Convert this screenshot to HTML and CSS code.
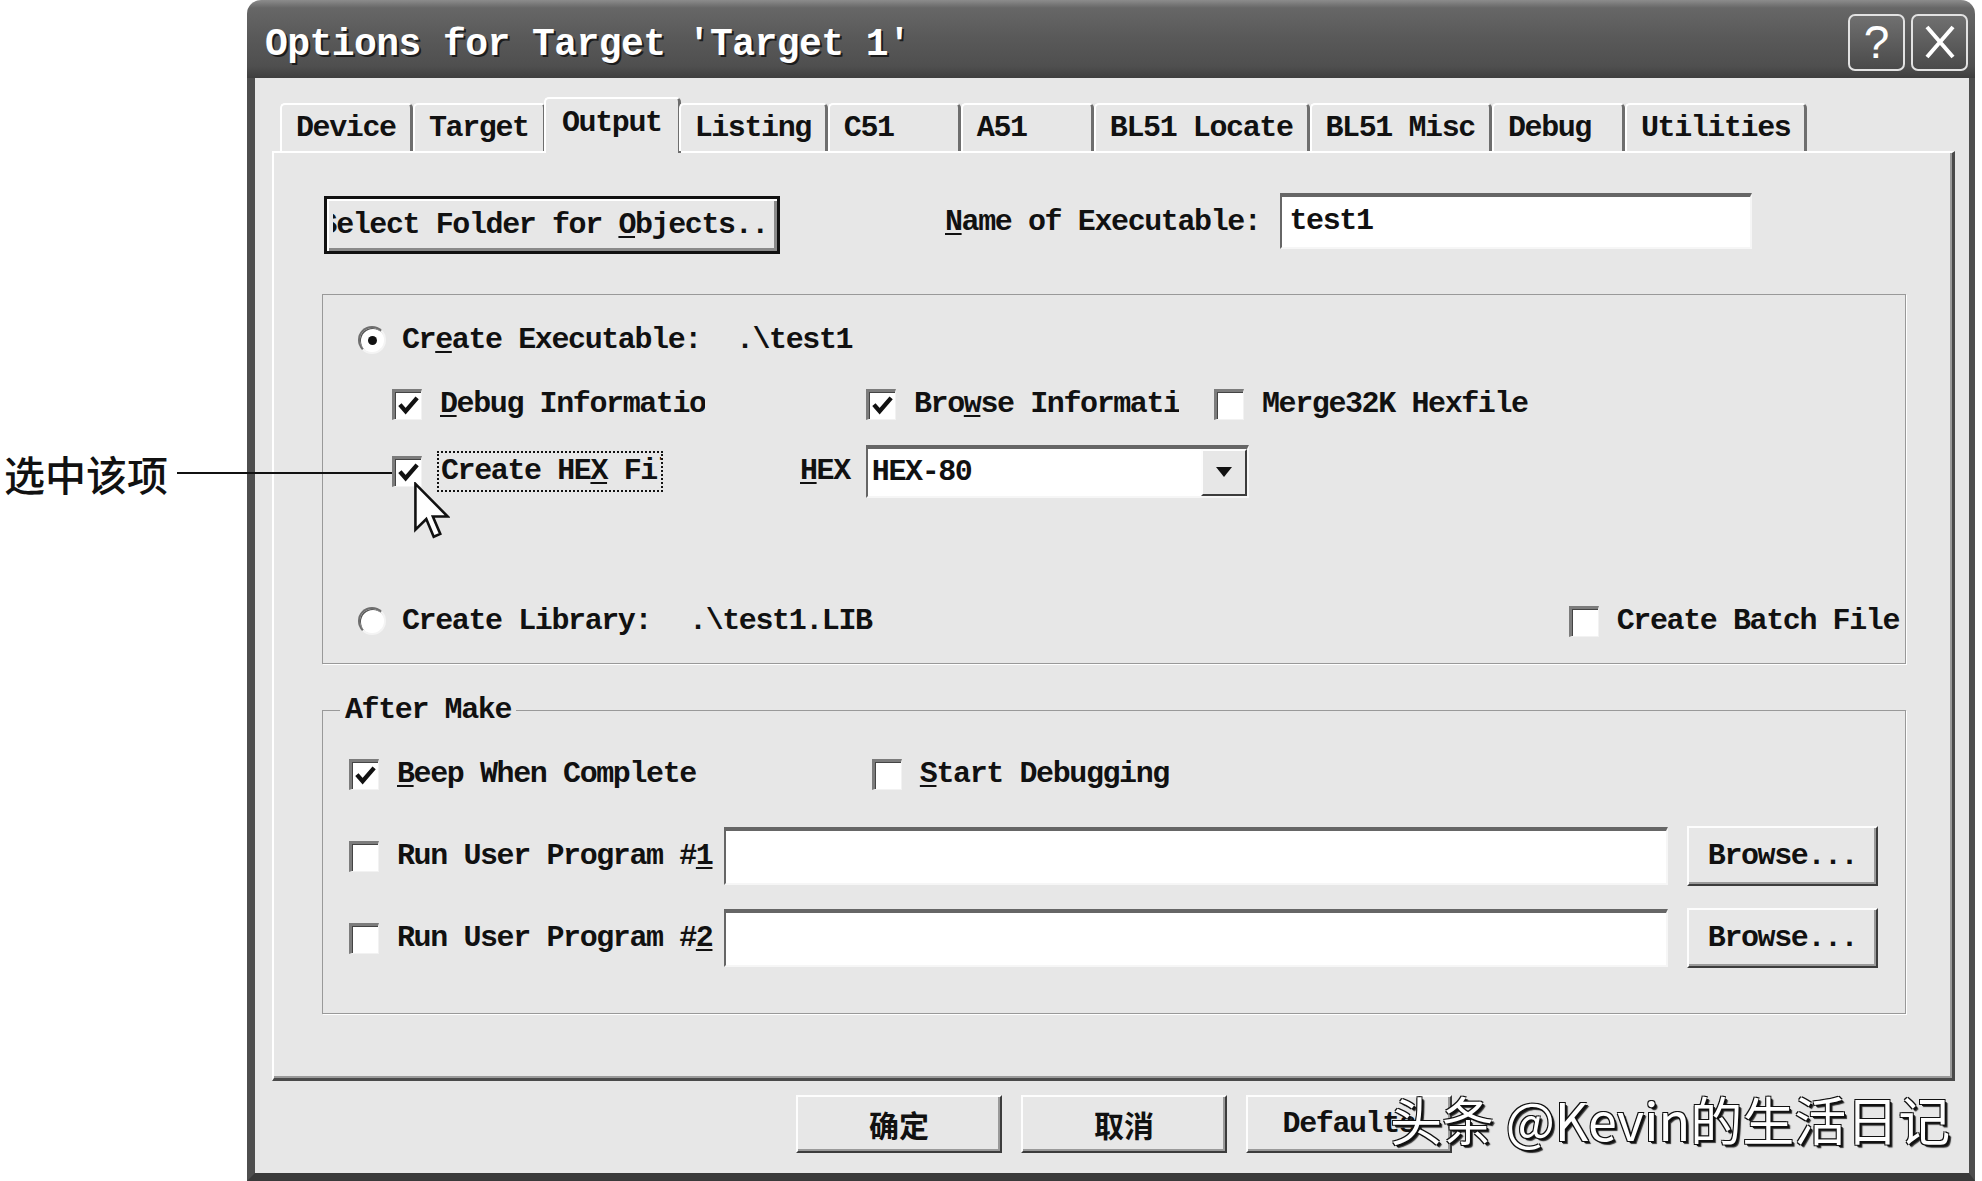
FILE: index.html
```html
<!DOCTYPE html>
<html lang="zh-CN">
<head>
    <meta charset="UTF-8">
    <meta name="viewport" content="width=device-width, initial-scale=1.0">
    <title>Options for Target 'Target 1'</title>
    <link rel="stylesheet" href="styles.css">
</head>
<body>
    <div id="page">
        <div id="window">
            <div class="titlebar">
                <span class="titleText">Options for Target 'Target 1'</span>
                <div class="capButtons">
                    <div class="capBtn">?</div>
                    <div class="capBtn">
                        <svg viewBox="0 0 36 40" width="36" height="40"><path d="M5 5 L31 35 M31 5 L5 35" stroke="#fff" stroke-width="4" fill="none"/></svg>
                    </div>
                </div>
            </div>
            <div class="client">
                <div class="tabs">
                    <div class="tab">Device</div>
                    <div class="tab">Target</div>
                    <div class="tab active">Output</div>
                    <div class="tab">Listing</div>
                    <div class="tab">C51</div>
                    <div class="tab">A51</div>
                    <div class="tab">BL51 Locate</div>
                    <div class="tab">BL51 Misc</div>
                    <div class="tab">Debug</div>
                    <div class="tab">Utilities</div>
                </div>
                <div class="panel">
                    <div class="outputRow">
                        <div class="btn btnDefault btnFolder">
                            <div class="folderText"><span>Select Folder for <u>O</u>bjects...</span></div>
                        </div>
                        <span class="nameLabel"><u>N</u>ame of Executable:</span>
                        <div class="textBox nameBox">test1</div>
                    </div>

                    <div class="group groupExe">
                        <div class="optRow">
                            <span class="radio on"></span>
                            <span>Cr<u>e</u>ate Executable:</span>
                            <span class="pathExe">.\test1</span>
                        </div>
                        <div class="optRow rowFlags">
                            <span class="check"><svg viewBox="0 0 24 24"><path d="M3 11 L9 18 L21 4" stroke="#111" stroke-width="4.5" fill="none"/></svg></span>
                            <span class="clip"><u>D</u>ebug Information</span>
                            <span class="check gapBrowse"><svg viewBox="0 0 24 24"><path d="M3 11 L9 18 L21 4" stroke="#111" stroke-width="4.5" fill="none"/></svg></span>
                            <span class="clip">Bro<u>w</u>se Information</span>
                            <span class="check gapMerge"></span>
                            <span>Merge32K Hexfile</span>
                        </div>
                        <div class="optRow rowHex">
                            <span class="check checkFocus"><svg viewBox="0 0 24 24"><path d="M3 11 L9 18 L21 4" stroke="#111" stroke-width="4.5" fill="none"/></svg></span>
                            <span class="focus"><span>Create HE<u>X</u> File</span></span>
                            <span class="hexLabel"><u>H</u>EX</span>
                            <div class="combo">
                                <span>HEX-80</span>
                                <span class="comboBtn"><svg viewBox="0 0 16 10" width="16" height="10"><path d="M0 0 H16 L8 10 Z" fill="#111"/></svg></span>
                            </div>
                        </div>
                        <div class="optRow rowLib">
                            <span class="radio"></span>
                            <span>Create Library:</span>
                            <span class="pathLib">.\test1.LIB</span>
                            <span class="check gapBatch"></span>
                            <span>Create Batch File</span>
                        </div>
                    </div>

                    <fieldset class="group groupMake">
                        <legend>After Make</legend>
                        <div class="optRow rowBeep">
                            <span class="check"><svg viewBox="0 0 24 24"><path d="M3 11 L9 18 L21 4" stroke="#111" stroke-width="4.5" fill="none"/></svg></span>
                            <span><u>B</u>eep When Complete</span>
                            <span class="check gapDebug"></span>
                            <span><u>S</u>tart Debugging</span>
                        </div>
                        <div class="optRow rowRun">
                            <span class="check"></span>
                            <span class="runLabel">Run User Program #<u>1</u></span>
                            <div class="textBox runBox"></div>
                            <div class="btn btnBrowse">Browse...</div>
                        </div>
                        <div class="optRow rowRun rowRun2">
                            <span class="check"></span>
                            <span class="runLabel">Run User Program #<u>2</u></span>
                            <div class="textBox runBox"></div>
                            <div class="btn btnBrowse">Browse...</div>
                        </div>
                    </fieldset>
                </div>
                <div class="dlgButtons">
                    <div class="btn btnDlg cjk">确定</div>
                    <div class="btn btnDlg cjk">取消</div>
                    <div class="btn btnDlg">Defaults</div>
                </div>
            </div>
        </div>

        <div class="note">
            <span class="noteText">选中该项</span>
            <span class="noteLine"></span>
        </div>
        <svg class="cursor" viewBox="0 0 12.6 19.6" width="36" height="57">
            <path d="M0.5 0.5 V16.5 L4.3 12.8 L6.9 19 L9.2 18 L6.6 11.9 H11.8 Z" fill="#fff" stroke="#111" stroke-width="0.9" stroke-linejoin="miter"/>
        </svg>
        <div class="watermark">头条 @Kevin的生活日记</div>
    </div>
</body>
</html>
```

FILE: styles.css
```css
body {
    margin: 0;
    background: #fff;
}
#page {
    position: relative;
    width: 1982px;
    height: 1181px;
    overflow: hidden;
    box-sizing: border-box;
    padding-left: 247px;
    font-family: "Liberation Mono", monospace;
    font-weight: bold;
    font-size: 30px;
    letter-spacing: -1.4px;
    color: #111;
}
#window {
    width: 1728px;
    height: 1181px;
    display: flex;
    flex-direction: column;
}

/* title bar */
.titlebar {
    height: 78px;
    flex-shrink: 0;
    box-sizing: border-box;
    display: flex;
    align-items: center;
    padding: 10px 7px 0 18px;
    border-radius: 14px 14px 0 0;
    background: linear-gradient(#8c8c8c 0, #676767 10%, #5a5a5a 45%, #4f4f4f 85%, #3e3e3e 100%);
}
.titleText {
    font-size: 38px;
    letter-spacing: -0.55px;
    color: #fff;
    text-shadow: 2px 2px 0 #1c1c1c;
}
.capButtons {
    margin: -4px 0 0 auto;
    display: flex;
    gap: 6px;
}
.capBtn {
    width: 57px;
    height: 57px;
    box-sizing: border-box;
    border: 2px solid #e2e2e2;
    border-radius: 7px;
    background: linear-gradient(#707070, #4a4a4a);
    display: flex;
    align-items: center;
    justify-content: center;
    color: #fff;
    font-family: "Liberation Sans", sans-serif;
    font-weight: normal;
    font-size: 46px;
    letter-spacing: 0;
}

/* client area */
.client {
    flex: 1;
    display: flex;
    flex-direction: column;
    background: #e7e7e7;
    border-left: 8px solid #4e4e4e;
    border-right: 6px solid #4e4e4e;
    border-bottom: 8px solid #3a3a3a;
    padding: 19px 14px 0 17px;
}
.tabs {
    display: flex;
    align-items: flex-end;
    height: 54px;
    padding-left: 8px;
    position: relative;
    z-index: 1;
}
.tab {
    height: 48px;
    box-sizing: border-box;
    min-width: 133px;
    padding: 0 14px;
    display: flex;
    align-items: center;
    border-top: 2px solid #fff;
    border-left: 2px solid #fff;
    border-right: 3px solid #6e6e6e;
    border-radius: 5px 5px 0 0;
    white-space: nowrap;
}
.tab.active {
    height: 56px;
    margin: 0 -2px -2px;
    padding: 0 16px 6px;
    background: #e7e7e7;
}
.panel {
    height: 930px;
    box-sizing: border-box;
    border-top: 2px solid #fff;
    border-left: 2px solid #fff;
    border-right: 3px solid #4a4a4a;
    border-bottom: 3px solid #4a4a4a;
    box-shadow: inset -2px -2px 0 #9a9a9a;
    padding: 40px 0 0 48px;
}

/* controls */
.btn {
    box-sizing: border-box;
    background: #e7e7e7;
    border: 2px solid;
    border-color: #fdfdfd #3c3c3c #3c3c3c #fdfdfd;
    box-shadow: inset -2px -2px 0 #9a9a9a;
    display: flex;
    align-items: center;
    justify-content: center;
    white-space: nowrap;
    overflow: hidden;
}
.btnDefault {
    border: 3px solid #111;
    box-shadow: inset 2px 2px 0 #fff, inset -3px -3px 0 #8a8a8a;
}
.textBox {
    box-sizing: border-box;
    background: #fff;
    border-top: 4px solid #666;
    border-left: 2px solid #666;
    border-right: 2px solid #f6f6f6;
    border-bottom: 2px solid #f6f6f6;
}
.check {
    width: 30px;
    height: 31px;
    box-sizing: border-box;
    flex-shrink: 0;
    background: #fff;
    border-top: 3px solid #7c7c7c;
    border-left: 3px solid #7c7c7c;
    border-right: 1px solid #f2f2f2;
    border-bottom: 1px solid #f2f2f2;
    box-shadow: inset 1px 1px 0 #444;
    margin-right: 18px;
    display: flex;
    align-items: center;
    justify-content: center;
}
.check svg {
    width: 23px;
    height: 23px;
}
.radio {
    width: 28px;
    height: 28px;
    box-sizing: border-box;
    flex-shrink: 0;
    border-radius: 50%;
    background: #fff;
    border: 2px solid;
    border-color: #6e6e6e #f4f4f4 #f4f4f4 #6e6e6e;
    box-shadow: inset 1px 1px 0 #555;
    margin-right: 16px;
    display: flex;
    align-items: center;
    justify-content: center;
}
.radio.on::after {
    content: "";
    width: 9px;
    height: 9px;
    border-radius: 50%;
    background: #111;
}
u {
    text-decoration-thickness: 2px;
    text-underline-offset: 3px;
}

/* first row */
.outputRow {
    display: flex;
    align-items: flex-start;
    height: 61px;
}
.btnFolder {
    width: 456px;
    height: 58px;
    margin: 3px 0 0 2px;
    padding: 0 6px;
}
.folderText {
    width: 100%;
    overflow: hidden;
    display: flex;
    justify-content: center;
}
.nameLabel {
    margin-left: 165px;
    line-height: 58px;
}
.nameBox {
    width: 472px;
    height: 56px;
    margin-left: 20px;
    padding: 6px 0 0 7px;
    line-height: 36px;
}

/* group boxes */
.group {
    box-sizing: border-box;
    width: 1584px;
    border: 1px solid #999;
    box-shadow: 1px 1px 0 #fff;
}
.groupExe {
    height: 370px;
    margin-top: 40px;
    padding: 23px 0 0 35px;
}
.optRow {
    display: flex;
    align-items: center;
    height: 44px;
    white-space: nowrap;
}
.pathExe {
    margin-left: 35px;
}
.rowFlags {
    margin-top: 20px;
    padding-left: 34px;
}
.clip {
    display: inline-block;
    width: 265px;
    overflow: hidden;
}
.gapBrowse {
    margin-left: 161px;
}
.gapMerge {
    margin-left: 35px;
}
.rowHex {
    margin-top: 23px;
    padding-left: 34px;
}
.checkFocus {
    margin-right: 15px;
}
.focus {
    width: 226px;
    height: 41px;
    box-sizing: border-box;
    border: 2px dotted #111;
    padding-left: 2px;
    overflow: hidden;
    line-height: 36px;
}
.hexLabel {
    margin-left: 137px;
}
.combo {
    width: 383px;
    height: 53px;
    margin-left: 16px;
    box-sizing: border-box;
    background: #fff;
    border-top: 4px solid #666;
    border-left: 2px solid #666;
    border-right: 2px solid #f6f6f6;
    border-bottom: 2px solid #f6f6f6;
    padding-left: 4px;
    display: flex;
    align-items: center;
}
.comboBtn {
    margin-left: auto;
    width: 46px;
    height: 100%;
    box-sizing: border-box;
    background: #e7e7e7;
    border: 2px solid;
    border-color: #fdfdfd #3c3c3c #3c3c3c #fdfdfd;
    display: flex;
    align-items: center;
    justify-content: center;
}
.rowLib {
    margin-top: 106px;
    padding-right: 6px;
}
.pathLib {
    margin-left: 38px;
}
.gapBatch {
    margin-left: auto;
}

fieldset.groupMake {
    margin: 29px 0 0;
    padding: 25px 0 45px 26px;
    min-width: 0;
}
legend {
    margin-left: -9px;
    padding: 0 5px;
    line-height: 34px;
}
.gapDebug {
    margin-left: 176px;
}
.rowRun {
    height: 60px;
    margin-top: 30px;
}
.rowRun2 {
    margin-top: 22px;
}
.runLabel {
    width: 324px;
    overflow: hidden;
}
.runBox {
    width: 944px;
    height: 58px;
    margin-left: 3px;
}
.btnBrowse {
    width: 191px;
    height: 60px;
    margin-left: 19px;
}

/* dialog buttons */
.dlgButtons {
    display: flex;
    gap: 19px;
    margin-top: 14px;
    padding-left: 524px;
}
.btnDlg {
    width: 206px;
    height: 58px;
}
.cjk {
    font-family: "Noto Sans CJK SC", sans-serif;
    letter-spacing: 0;
    font-size: 30px;
}

/* overlays */
.note {
    position: absolute;
    left: 4px;
    top: 449px;
    display: flex;
    align-items: center;
}
.noteText {
    font-family: "Noto Sans CJK SC", sans-serif;
    font-weight: 500;
    font-size: 41px;
    letter-spacing: 0;
    line-height: 48px;
}
.noteLine {
    width: 215px;
    height: 2px;
    margin-left: 9px;
    background: #111;
}
.cursor {
    position: absolute;
    left: 414px;
    top: 482px;
}
.watermark {
    position: absolute;
    left: 1390px;
    top: 1089px;
    font-family: "Noto Sans CJK SC", sans-serif;
    font-weight: normal;
    font-size: 52px;
    line-height: 60px;
    letter-spacing: 0;
    color: #fff;
    text-shadow: 2px 2px 0 #111, -1px -1px 0 #111, 1px -1px 0 #111, -1px 1px 0 #111, 3px 3px 1px #333;
}
```
